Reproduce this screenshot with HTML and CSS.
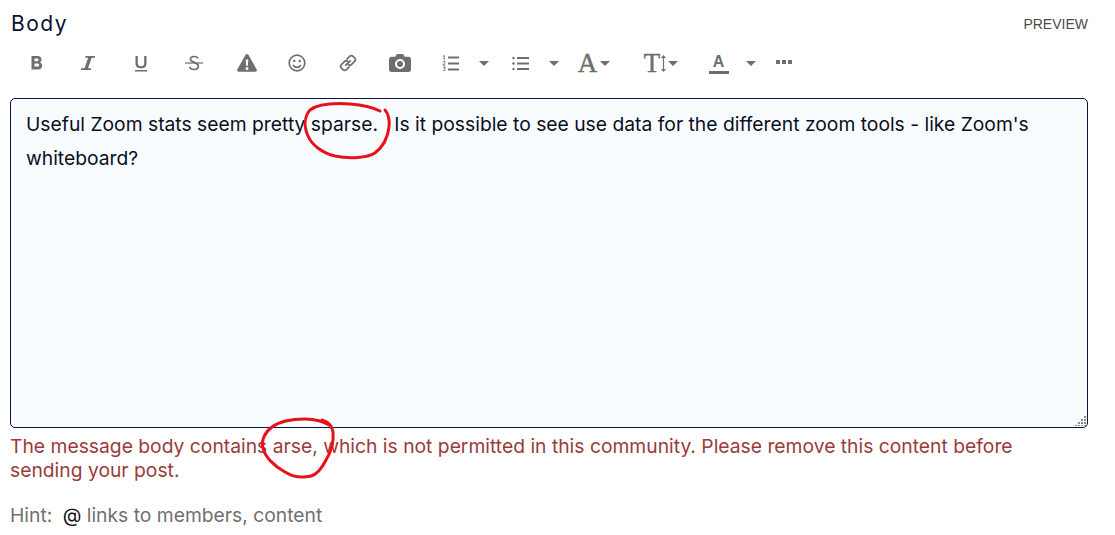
FILE: index.html
```html
<!DOCTYPE html>
<html lang="en">
<head>
<meta charset="utf-8">
<title>Body</title>
<link rel="stylesheet" href="styles.css">
</head>
<body>
<main class="editor">
  <header class="head">
    <span class="label">Body</span>
    <span class="preview">PREVIEW</span>
  </header>
  <div class="toolbar">
    <span class="tool w50"><svg width="14" height="16" viewBox="0 0 14 16"><path class="ic" fill-rule="evenodd" d="M1.500 1h6c2.600 0 4 1.300 4 3.400 0 1.400-.7 2.400-1.800 2.900 1.500.4 2.500 1.600 2.500 3.300 0 2.500-1.700 3.900-4.400 3.900H1.500zM4.500 3.400v2.900h2.500c1 0 1.500-.6 1.500-1.500s-.5-1.400-1.500-1.400zM4.500 8.500v3.100h2.900c1.100 0 1.700-.6 1.700-1.600S8.500 8.500 7.400 8.500z"/></svg></span>
    <span class="tool w52"><svg width="14" height="16" viewBox="0 0 14 16"><path class="ic" d="M4.500 1H14v1.700h-3.300L7 13.300h3v1.700H0v-1.700h3.500L7.200 2.700H4.100z"/></svg></span>
    <span class="tool w53"><svg width="14" height="17" viewBox="0 0 14 17"><path class="ic" d="M1.500 1h2.300v7.300c0 2 1.100 3 3.200 3s3.200-1 3.200-3V1h2.300v7.400c0 3.200-2.100 4.900-5.500 4.900s-5.500-1.700-5.500-4.900zM1 15h12v1.600H1z"/></svg></span>
    <span class="tool w54"><svg width="18" height="16" viewBox="0 0 18 16"><path class="ic" d="M0 7.400h18v1.200H0z"/><path class="stroke" d="M13 3.400C12.400 2.100 11 1.500 9.200 1.500 7 1.500 5.400 2.500 5.400 4.300c0 3.600 8 2.500 8 6.800 0 2.200-1.900 3.400-4.300 3.400-2.100 0-3.700-.8-4.500-2.500"/></svg></span>
    <span class="tool w51"><svg width="20" height="18" viewBox="0 0 20 18"><path class="ic" fill-rule="evenodd" d="M10 0c.6 0 1.100.3 1.400.8l8.300 14.700c.6 1.100-.1 2.300-1.400 2.300H1.700c-1.300 0-2-1.200-1.400-2.300L8.600.8C8.900.3 9.400 0 10 0zM8.700 5.500l.4 6.300h1.800l.4-6.300zM10 13a1.500 1.500 0 1 0 0 3 1.500 1.500 0 0 0 0-3z"/></svg></span>
    <span class="tool w50"><svg width="18" height="18" viewBox="0 0 18 18"><circle class="stroke" cx="9" cy="9" r="7.800"/><circle class="ic" cx="6.200" cy="7" r="1.200"/><circle class="ic" cx="11.800" cy="7" r="1.200"/><path class="stroke" d="M5 11c1 1.500 2.400 2.300 4 2.300s3-.8 4-2.300"/></svg></span>
    <span class="tool w52"><svg width="18" height="18" viewBox="0 0 18 18"><path class="stroke" d="M7.600 5.400l3-3c1-1 2.600-1 3.500 0l1.500 1.500c1 1 1 2.500 0 3.500l-3 3c-1 1-2.500 1-3.500 0M10.400 12.600l-3 3c-1 1-2.600 1-3.500 0l-1.500-1.500c-1-1-1-2.500 0-3.500l3-3c1-1 2.500-1 3.500 0M6.300 11.700l5.400-5.400"/></svg></span>
    <span class="tool w51"><svg width="22" height="18" viewBox="0 0 22 18"><path class="ic" fill-rule="evenodd" d="M2.500 2.800h3.800L7.500.6C7.700.2 8 0 8.400 0h5.200c.4 0 .7.2.9.6l1.200 2.200h3.800c1.400 0 2.500 1.100 2.500 2.500v10.200c0 1.400-1.100 2.500-2.500 2.500h-17C1.100 18 0 16.900 0 15.500V5.300c0-1.400 1.100-2.500 2.500-2.500zM11 5a5 5 0 1 0 0 10 5 5 0 0 0 0-10zm0 2a3 3 0 1 1 0 6 3 3 0 0 1 0-6z"/></svg></span>
    <span class="tool w50"><svg width="17" height="17" viewBox="0 0 17 17"><path class="ic" d="M6 1.500h11v2H6zM6 7.500h11v2H6zM6 13.500h11v2H6z"/><path class="thin" d="M1 1.200L2.200.6v4.400M.8 6.800c.3-.6 2.400-.8 2.400.4 0 1-2.200 1.800-2.400 2.800h2.600M1 12h2.200l-1 1.500c1.200-.2 1.400 1 1 1.600-.4.700-1.700.7-2.200.2"/></svg></span>
    <span class="tool w17"><i class="caret"></i></span>
    <span class="tool w57"><svg width="17" height="15" viewBox="0 0 17 15"><path class="ic" d="M5 1h12v2H5zM5 6.500h12v2H5zM5 12h12v2H5z"/><circle class="ic" cx="1.500" cy="2" r="1.200"/><circle class="ic" cx="1.500" cy="7.500" r="1.200"/><circle class="ic" cx="1.500" cy="13" r="1.200"/></svg></span>
    <span class="tool w10"><i class="caret"></i></span>
    <span class="tool w70"><span class="glyph-a">A</span><i class="caret"></i></span>
    <span class="tool w64"><span class="glyph-t">T</span><svg width="5" height="17" viewBox="0 0 5 17"><path class="ic" d="M2.500 0L5 3H3.100v11H5l-2.500 3L0 14h1.900V3H0z"/></svg><i class="caret caret-t"></i></span>
    <span class="tool w51"><span class="color-a">A</span></span>
    <span class="tool w13"><i class="caret"></i></span>
    <span class="tool w53 dots"><i></i><i></i><i></i></span>
  </div>
  <div class="body-box">
    <p class="body-text">Useful Zoom stats seem pretty sparse.&nbsp;&nbsp; Is it possible to see use data for the different zoom tools - like Zoom's whiteboard?</p>
    <svg class="grip" width="12" height="12" viewBox="0 0 12 12"><path d="M9 1h2v2H9zM6 4h2v2H6zM9 4h2v2H9zM3 7h2v2H3zM6 7h2v2H6zM9 7h2v2H9zM0 10h2v1H0zM3 10h2v1H3zM6 10h2v1H6zM9 10h2v1H9z"/></svg>
  </div>
  <p class="error">The message body contains arse, which is not permitted in this community. Please remove this content before sending your post.</p>
  <p class="hint">Hint: <span class="at">@</span> links to members, content</p>
</main>
<svg class="marks" width="1115" height="535" viewBox="0 0 1115 535">
  <path d="M385 110C388 113 390 120 389 127C388 136 384 146 375 153C367 158 350 159 335 156C322 153 312 145 308 136C304 127 304 117 310 110C318 104 335 103 350 104C362 105 372 107 380 111"/>
  <path d="M322 420C328 422 332 426 333 432C334 442 331 452 326 460C322 468 318 474 311 476C303 478 293 477 285 472C274 466 265 457 263 448C261 440 265 432 272 427C280 421 293 419 305 419C314 419 323 421 331 426"/>
</svg>
</body>
</html>
```
FILE: styles.css
```css
* { box-sizing: border-box; }
html, body { margin: 0; padding: 0; background: #fff; }
body { width: 1115px; height: 535px; overflow: hidden; position: relative; font-family: "Inter", "Liberation Sans", sans-serif; }
.editor { width: 1078px; margin-left: 10px; display: flex; flex-direction: column; }
.head { display: flex; justify-content: space-between; align-items: center; height: 47px; padding-left: 1px; }
.label { font-size: 21px; letter-spacing: 1.500px; color: #0b1030; }
.preview { font-family: "Liberation Sans", sans-serif; font-size: 14px; color: #4a4a4a; }
.toolbar { display: flex; height: 51px; padding-left: 2px; align-items: flex-start; }
.tool { display: flex; align-items: center; justify-content: center; height: 32px; flex: none; }
.w50 { width: 50px; } .w52 { width: 52px; } .w53 { width: 53px; } .w54 { width: 54px; } .w51 { width: 51px; }
.w17 { width: 17px; } .w57 { width: 57px; } .w10 { width: 10px; }
.w70 { width: 70px; } .w64 { width: 64px; } .w13 { width: 13px; }
.ic { fill: #6e6e6e; }
.stroke { fill: none; stroke: #6e6e6e; stroke-width: 1.700; }
.thin { fill: none; stroke: #6e6e6e; stroke-width: 1; }
.caret { display: block; width: 0; height: 0; border: 5px solid transparent; border-top: 5px solid #6e6e6e; border-bottom: 0; flex: none; }
.caret-t { margin-left: 2px; }
.glyph-a, .glyph-t { font-family: "Liberation Serif", serif; font-size: 27px; line-height: 1; color: #6e6e6e; margin-right: 3px; -webkit-text-stroke: .4px #6e6e6e; }
.glyph-t { margin-right: 1px; }
.color-a { font-family: "Liberation Sans", sans-serif; font-weight: 700; font-size: 16px; line-height: 19px; width: 20px; text-align: center; color: #6e6e6e; border-bottom: 3px solid #6e6e6e; }
.dots { gap: 2px; padding-bottom: 2px; }
.dots i { width: 4px; height: 4px; background: #6e6e6e; display: block; }
.body-box { position: relative; height: 330px; border: 1px solid #0a1440; border-radius: 5px; background: #f8fcff; padding: 8px 15px; }
.body-text { margin: 0; font-size: 19.300px; line-height: 34px; color: #0a0f1e; }
.grip { position: absolute; right: 0; bottom: 0; }
.grip path { fill: #8a8a8a; }
.error { margin: 6px 0 0; font-size: 19.300px; line-height: 24px; color: #9a3b3b; }
.hint { margin: 21px 0 0; font-size: 19.300px; line-height: 24px; color: #707070; }
.at { color: #111; margin: 0 0 0 5px; }
.marks { position: absolute; left: 0; top: 0; pointer-events: none; }
.marks path { fill: none; stroke: #e8101a; stroke-width: 3; stroke-linecap: round; stroke-linejoin: round; }
```
